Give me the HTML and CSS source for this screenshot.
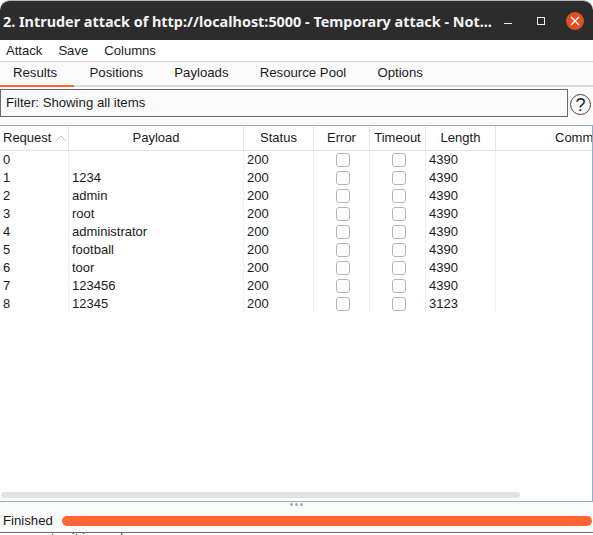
FILE: index.html
```html
<!DOCTYPE html>
<html lang="en">
<head>
    <meta charset="UTF-8">
    <meta name="viewport" content="width=device-width, initial-scale=1.0">
    <title>Intruder attack</title>
    <link rel="stylesheet" href="styles.css">
</head>
<body>
    <div class="behind">some notes it is used</div>
    <div class="window">
        <header class="titlebar">
            <h1>2. Intruder attack of http://localhost:5000 - Temporary attack - Not...</h1>
            <div class="controls">
                <span class="min"></span>
                <span class="max"></span>
                <span class="close">
                    <svg width="10" height="10" viewBox="0 0 10 10"><path d="M1 1L9 9M9 1L1 9" stroke="#fff" stroke-width="1.3" fill="none"/></svg>
                </span>
            </div>
        </header>

        <nav class="menu">
            <a href="#">Attack</a>
            <a href="#">Save</a>
            <a href="#">Columns</a>
        </nav>

        <nav class="tabs">
            <a href="#" class="active">Results</a>
            <a href="#">Positions</a>
            <a href="#">Payloads</a>
            <a href="#">Resource Pool</a>
            <a href="#">Options</a>
        </nav>

        <div class="filter-row">
            <div class="filter">Filter: Showing all items</div>
            <span class="help">?</span>
        </div>

        <section class="results">
            <div class="row head">
                <div class="sorted">Request
                    <svg class="sort" width="10" height="6" viewBox="0 0 10 6"><path d="M0.5 5.5L5 1L9.5 5.5" stroke="#c4c4c4" fill="none"/></svg>
                </div>
                <div>Payload</div>
                <div>Status</div>
                <div>Error</div>
                <div>Timeout</div>
                <div>Length</div>
                <div class="comment">Comment</div>
            </div>
            <div class="row"><div>0</div><div></div><div>200</div><div><i class="check"></i></div><div><i class="check"></i></div><div>4390</div><div></div></div>
            <div class="row"><div>1</div><div>1234</div><div>200</div><div><i class="check"></i></div><div><i class="check"></i></div><div>4390</div><div></div></div>
            <div class="row"><div>2</div><div>admin</div><div>200</div><div><i class="check"></i></div><div><i class="check"></i></div><div>4390</div><div></div></div>
            <div class="row"><div>3</div><div>root</div><div>200</div><div><i class="check"></i></div><div><i class="check"></i></div><div>4390</div><div></div></div>
            <div class="row"><div>4</div><div>administrator</div><div>200</div><div><i class="check"></i></div><div><i class="check"></i></div><div>4390</div><div></div></div>
            <div class="row"><div>5</div><div>football</div><div>200</div><div><i class="check"></i></div><div><i class="check"></i></div><div>4390</div><div></div></div>
            <div class="row"><div>6</div><div>toor</div><div>200</div><div><i class="check"></i></div><div><i class="check"></i></div><div>4390</div><div></div></div>
            <div class="row"><div>7</div><div>123456</div><div>200</div><div><i class="check"></i></div><div><i class="check"></i></div><div>4390</div><div></div></div>
            <div class="row"><div>8</div><div>12345</div><div>200</div><div><i class="check"></i></div><div><i class="check"></i></div><div>3123</div><div></div></div>
            <div class="scrollbar"></div>
        </section>

        <div class="grip"><b></b><b></b><b></b></div>

        <footer class="status">
            <span>Finished</span>
            <div class="progress"></div>
        </footer>
    </div>
</body>
</html>
```

FILE: styles.css
```css
* {
    box-sizing: border-box;
}
html, body {
    height: 100%;
}
body {
    margin: 0;
    overflow: hidden;
    background-color: #fff;
    font-family: "Liberation Sans", Arial, sans-serif;
    font-size: 13px;
    color: #1a1a1a;
}
a {
    color: inherit;
    text-decoration: none;
}

/* text of the window behind, only its top shows */
.behind {
    position: absolute;
    left: 1px;
    top: 530px;
    font-size: 13px;
    color: #333;
}

.window {
    position: relative;
    height: 533px;
    display: flex;
    flex-direction: column;
    background-color: #fafafa;
    border-bottom: 1px solid #6e6e6e;
}

.titlebar {
    height: 40px;
    flex: none;
    display: flex;
    align-items: center;
    justify-content: space-between;
    padding: 1px 0 0 3px;
    background-color: #2c2c2c;
    border-top: 1px solid #b5b5b5;
    border-radius: 10px 10px 0 0;
    color: #f4f4f4;
}
.titlebar h1 {
    margin: 0;
    font-family: "Noto Sans", sans-serif;
    font-size: 14.4px;
    font-weight: 700;
    white-space: nowrap;
}
.controls {
    display: flex;
    align-items: center;
}
.min {
    width: 8px;
    height: 1px;
    margin-top: 4px;
    background-color: #eee;
}
.max {
    width: 8px;
    height: 8px;
    margin-left: 25px;
    border: 1px solid #eee;
}
.close {
    width: 18px;
    height: 18px;
    margin: 0 9px 0 21px;
    display: flex;
    align-items: center;
    justify-content: center;
    border-radius: 50%;
    background-color: #e05020;
}

.menu {
    height: 22px;
    flex: none;
    display: flex;
    align-items: center;
    gap: 16px;
    padding-left: 6px;
    font-size: 13.1px;
    background-color: #fff;
    border-bottom: 1px solid #d2d2d2;
}

.tabs {
    height: 25px;
    flex: none;
    display: flex;
    font-size: 13.2px;
    border-bottom: 2px solid #d8d8d8;
}
.tabs a {
    height: 25px;
    padding: 3px 15.6px 0;
}
.tabs a.active {
    padding: 3px 17px 0 13px;
    border-bottom: 2px solid #ff6633;
}

.filter-row {
    height: 30px;
    flex: none;
    margin-top: 2px;
    display: flex;
    align-items: flex-start;
}
.filter {
    width: 568px;
    height: 28px;
    flex: none;
    display: flex;
    align-items: center;
    padding: 0 0 2px 5px;
    font-size: 13.2px;
    border: 1px solid #6a6a6a;
}
.help {
    width: 21px;
    height: 21px;
    margin: 5px 0 0 2px;
    border: 1px solid #444;
    border-radius: 50%;
    text-align: center;
    font-size: 18px;
    line-height: 20px;
}

.results {
    position: relative;
    height: 377px;
    margin-top: 6px;
    flex: none;
    background-color: #fff;
    border: 1px solid #8fb0d0;
    border-left: none;
    overflow: hidden;
}
.row {
    display: grid;
    grid-template-columns: 69px 175px 70px 56px 56px 70px 140px;
    width: 700px;
    height: 18px;
    line-height: 17px;
}
.row > div {
    padding-left: 3px;
    border-right: 1px solid #f0f0f0;
    white-space: nowrap;
}
.row > div:nth-child(4), .row > div:nth-child(5) {
    padding-left: 2px;
    display: flex;
    justify-content: center;
    align-items: center;
}
.row > div:last-child {
    border-right: none;
}
.row.head {
    height: 25px;
    line-height: 23px;
    border-bottom: 1px solid #e4e4e4;
}
.row.head > div {
    padding-left: 0;
    display: block;
    text-align: center;
    border-right: 1px solid #e4e4e4;
}
.row.head > div.sorted {
    padding-left: 3px;
    text-align: left;
}
.row.head > div.comment {
    padding-left: 59px;
    text-align: left;
}
.sort {
    margin-left: 1px;
    vertical-align: 1px;
}
.check {
    display: block;
    width: 14px;
    height: 14px;
    border: 1px solid #b4b4b4;
    border-radius: 3px;
    background-color: #fff;
}
.scrollbar {
    position: absolute;
    left: 1px;
    bottom: 3px;
    width: 519px;
    height: 6px;
    border-radius: 3px;
    background-color: #e4e4e4;
}

.grip {
    height: 6px;
    flex: none;
    display: flex;
    justify-content: center;
    gap: 2px;
    padding-top: 1px;
}
.grip b {
    width: 3px;
    height: 3px;
    border-radius: 50%;
    background-color: #aaa;
}

.status {
    height: 24px;
    flex: none;
    display: flex;
    align-items: center;
    gap: 9px;
    padding-left: 3px;
    font-size: 13.2px;
}
.progress {
    flex: 1;
    height: 10px;
    margin: 2px 1px 0 0;
    border-radius: 5px;
    background-color: #ff6633;
}
```
